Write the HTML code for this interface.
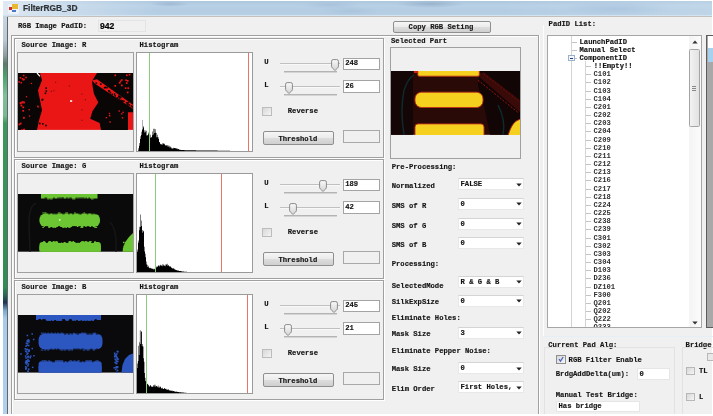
<!DOCTYPE html><html><head><meta charset="utf-8"><style>html,body{margin:0;padding:0;}body{width:713px;height:416px;position:relative;overflow:hidden;background:#fff;}div{position:absolute;}.t{font:bold 7.2px/10px "Liberation Mono",monospace;color:#141414;white-space:pre;-webkit-text-stroke:0.15px #141414;}.s{font:9px/12px "Liberation Sans",sans-serif;white-space:pre;}</style></head><body><div style="left:0;top:0;width:713px;height:416px;will-change:transform">
<div style="left:3px;top:1px;width:709px;height:15px;background:linear-gradient(180deg,#aec7dd 0%,#b8d0e6 30%,#b4cde3 60%,#b6cfe5 100%)"></div>
<div style="left:3px;top:1px;width:709px;height:15px;background:linear-gradient(90deg,rgba(230,238,245,0.85) 0%,rgba(225,235,244,0.6) 6%,rgba(220,232,242,0.0) 22%,rgba(220,232,242,0) 70%,rgba(220,232,242,0.25) 100%)"></div>
<div style="left:150px;top:1px;width:40px;height:6px;background:radial-gradient(ellipse at center,rgba(120,150,180,0.35),rgba(120,150,180,0) 70%)"></div>
<div style="left:300px;top:1px;width:60px;height:8px;background:radial-gradient(ellipse at center,rgba(130,160,190,0.25),rgba(130,160,190,0) 70%)"></div>
<div style="left:395px;top:0px;width:70px;height:8px;background:radial-gradient(ellipse at center,rgba(110,140,170,0.4),rgba(110,140,170,0) 70%)"></div>
<div style="left:560px;top:1px;width:110px;height:15px;background:radial-gradient(ellipse at center,rgba(140,175,210,0.3),rgba(140,175,210,0) 70%)"></div>
<div style="left:320px;top:6px;width:60px;height:10px;background:radial-gradient(ellipse at center,rgba(140,170,200,0.25),rgba(140,170,200,0) 70%)"></div>
<div style="left:3px;top:15px;width:709px;height:1px;background:#d2e4f2"></div>
<div style="left:3px;top:16px;width:709px;height:1px;background:#c4c0bc"></div>
<div style="left:3px;top:16px;width:4px;height:398px;background:linear-gradient(180deg,#c8d6e2 0%,#bcc8d2 6%,#8a9c9c 10%,#5a7a6a 12%,#4aa06c 15%,#80c098 20%,#78b890 25%,#3a9a58 27%,#2e8e50 68%,#2a6a50 70%,#1e3450 72%,#7aa8cc 74%,#a8cce8 76%,#b0d0ec 100%)"></div>
<div style="left:7px;top:17px;width:705px;height:397px;background:#f0f0f0"></div>
<div style="left:7px;top:17px;width:1px;height:397px;background:#5e6670"></div>
<div style="left:7.5px;top:3.5px;width:11px;height:10px;background:rgba(255,255,255,0.5);border-radius:2px"></div>
<div style="left:8.7px;top:6.6px;width:3.4px;height:3.8px;background:#d0302a"></div>
<div style="left:12.4px;top:4.3px;width:5.2px;height:4.9px;background:#e8b830"></div>
<div style="left:12.4px;top:9.5px;width:4.1px;height:2.5px;background:#4a78c8"></div>
<div class="s" style="left:23px;top:2.2px;color:#30343a;font-weight:bold;font-size:8.4px;-webkit-text-stroke:0.2px #30343a">FilterRGB_3D</div>
<div class="t" style="left:18px;top:21.10px;">RGB Image PadID:</div>
<div style="left:98px;top:20px;width:48px;height:12px;border:1px solid #e4e4e4;box-sizing:border-box"></div>
<div class="s" style="left:100px;top:19.6px;font-weight:bold;font-size:8.6px;line-height:12px;color:#000;-webkit-text-stroke:0.2px #000">942</div>
<div style="left:393px;top:21px;width:98px;height:12px;border:1px solid #8e8f8f;border-radius:2px;box-sizing:border-box;background:linear-gradient(180deg,#f6f6f6 0%,#ebebeb 48%,#dddddd 52%,#cfcfcf 100%)"></div>
<div class="t" style="left:408.6px;top:21.70px;">Copy RGB Seting</div>
<div style="left:11px;top:35px;width:1px;height:379px;background:#a0a0a0"></div>
<div style="left:12px;top:36px;width:1px;height:378px;background:#fff"></div>
<div style="left:11px;top:35px;width:528px;height:1px;background:#a0a0a0"></div>
<div style="left:12px;top:36px;width:526px;height:1px;background:#fff"></div>
<div style="left:538px;top:35px;width:1px;height:379px;background:#a0a0a0"></div>
<div style="left:539px;top:35px;width:1px;height:379px;background:#fff"></div>
<div style="left:15px;top:39px;width:370px;height:120px;border:1px solid #ffffff;box-sizing:border-box"></div>
<div style="left:14px;top:38px;width:370px;height:120px;border:1px solid #a0a0a0;box-sizing:border-box"></div>
<div class="t" style="left:21.5px;top:40.20px;">Source Image: R</div>
<div class="t" style="left:139.5px;top:40.20px;">Histogram</div>
<div style="left:17px;top:52px;width:117px;height:100px;border:1px solid #a0a0a0;box-sizing:border-box"></div>
<div style="left:18px;top:53px;width:115px;height:98px;background:#f0f0f0"></div>
<svg style="position:absolute;left:18px;top:72.7px" width="115" height="56.89999999999999" viewBox="18 72.7 115 56.89999999999999"><rect x="18" y="72.7" width="115" height="56.89999999999999" fill="#ea1616"/><polygon points="18,72.7 40,72.7 42,80 38,90 40,100 42,110 39,120 37,129.6 18,129.6" fill="#0a0606"/><polygon points="97,72.7 133,72.7 133,104.5 97,79 92.5,80" fill="#0a0606"/><polygon points="92,80 95,83.5 133,108.5 133,112 128,112 128,129.6 101,129.6 99.7,122.8 90.2,118.4 92.4,111 98.3,102.3 93.9,93.5 92.4,84.7" fill="#0a0606"/><rect x="103.8" y="86.7" width="1.6" height="1.6" fill="#0a0606"/><rect x="108.7" y="90.3" width="1.6" height="1.6" fill="#0a0606"/><rect x="118.2" y="95.0" width="1.6" height="1.6" fill="#0a0606"/><rect x="95.5" y="82.0" width="1.6" height="1.6" fill="#0a0606"/><rect x="104.6" y="86.2" width="1.6" height="1.6" fill="#0a0606"/><rect x="131.8" y="105.8" width="1.6" height="1.6" fill="#0a0606"/><rect x="125.9" y="101.7" width="1.6" height="1.6" fill="#0a0606"/><rect x="118.6" y="95.6" width="1.6" height="1.6" fill="#0a0606"/><rect x="118.5" y="97.9" width="1.6" height="1.6" fill="#0a0606"/><rect x="114.4" y="94.7" width="1.6" height="1.6" fill="#0a0606"/><rect x="119.8" y="96.1" width="1.6" height="1.6" fill="#0a0606"/><rect x="123.1" y="100.1" width="1.6" height="1.6" fill="#0a0606"/><rect x="106.1" y="86.6" width="1.6" height="1.6" fill="#0a0606"/><rect x="127.0" y="102.5" width="1.6" height="1.6" fill="#0a0606"/><rect x="121.6" y="100.1" width="1.6" height="1.6" fill="#0a0606"/><rect x="121.4" y="100.1" width="1.6" height="1.6" fill="#0a0606"/><rect x="109.6" y="91.6" width="1.6" height="1.6" fill="#0a0606"/><rect x="111.5" y="93.3" width="1.6" height="1.6" fill="#0a0606"/><rect x="127.5" y="101.5" width="1.6" height="1.6" fill="#0a0606"/><rect x="100.0" y="83.0" width="1.6" height="1.6" fill="#0a0606"/><rect x="130.7" y="104.9" width="1.6" height="1.6" fill="#0a0606"/><rect x="118.2" y="95.8" width="1.6" height="1.6" fill="#0a0606"/><rect x="113.8" y="93.0" width="1.6" height="1.6" fill="#0a0606"/><rect x="108.0" y="89.7" width="1.6" height="1.6" fill="#0a0606"/><rect x="116.6" y="96.8" width="1.6" height="1.6" fill="#0a0606"/><rect x="120.2" y="99.3" width="1.6" height="1.6" fill="#0a0606"/><rect x="126.7" y="104.0" width="1.6" height="1.6" fill="#0a0606"/><rect x="119.8" y="96.5" width="1.6" height="1.6" fill="#0a0606"/><rect x="126.8" y="104.0" width="1.6" height="1.6" fill="#0a0606"/><rect x="128.5" y="103.8" width="1.6" height="1.6" fill="#0a0606"/><rect x="22.3" y="106.1" width="1.8" height="1.8" fill="#ea1616"/><rect x="23.0" y="116.6" width="1.8" height="1.8" fill="#ea1616"/><rect x="19.7" y="101.8" width="1.8" height="1.8" fill="#ea1616"/><rect x="23.1" y="128.7" width="1.8" height="1.8" fill="#ea1616"/><rect x="18.5" y="123.2" width="1.8" height="1.8" fill="#ea1616"/><rect x="20.5" y="104.4" width="1.8" height="1.8" fill="#ea1616"/><rect x="19.8" y="122.3" width="1.8" height="1.8" fill="#ea1616"/><rect x="23.2" y="101.3" width="1.8" height="1.8" fill="#ea1616"/><rect x="21.7" y="101.3" width="1.8" height="1.8" fill="#ea1616"/><rect x="22.3" y="109.6" width="1.8" height="1.8" fill="#ea1616"/><rect x="23.3" y="128.4" width="1.8" height="1.8" fill="#ea1616"/><rect x="21.0" y="129.0" width="1.8" height="1.8" fill="#ea1616"/><rect x="19.9" y="102.2" width="1.8" height="1.8" fill="#ea1616"/><rect x="21.6" y="100.9" width="1.8" height="1.8" fill="#ea1616"/><rect x="19.6" y="76.7" width="1.6" height="1.6" fill="#ea1616"/><rect x="22.9" y="74.4" width="1.6" height="1.6" fill="#ea1616"/><rect x="18.3" y="80.8" width="1.6" height="1.6" fill="#ea1616"/><rect x="20.5" y="81.6" width="1.6" height="1.6" fill="#ea1616"/><rect x="25.2" y="76.4" width="1.6" height="1.6" fill="#ea1616"/><rect x="21.7" y="77.7" width="1.6" height="1.6" fill="#ea1616"/><rect x="23.2" y="78.4" width="1.6" height="1.6" fill="#ea1616"/><rect x="22.5" y="78.6" width="1.6" height="1.6" fill="#ea1616"/><rect x="37.0" y="105.3" width="1.3" height="1.3" fill="#ea1616"/><rect x="28.9" y="115.1" width="1.3" height="1.3" fill="#ea1616"/><rect x="25.8" y="95.8" width="1.3" height="1.3" fill="#ea1616"/><rect x="37.6" y="106.0" width="1.3" height="1.3" fill="#ea1616"/><rect x="30.8" y="82.5" width="1.3" height="1.3" fill="#ea1616"/><rect x="28.6" y="108.7" width="1.3" height="1.3" fill="#ea1616"/><rect x="114.4" y="84.7" width="1.7" height="1.7" fill="#ea1616"/><rect x="126.0" y="74.1" width="1.7" height="1.7" fill="#ea1616"/><rect x="125.9" y="81.9" width="1.7" height="1.7" fill="#ea1616"/><rect x="126.9" y="79.7" width="1.7" height="1.7" fill="#ea1616"/><rect x="127.4" y="87.0" width="1.7" height="1.7" fill="#ea1616"/><rect x="114.4" y="74.2" width="1.7" height="1.7" fill="#ea1616"/><rect x="126.8" y="91.3" width="1.7" height="1.7" fill="#ea1616"/><rect x="118.8" y="81.7" width="1.7" height="1.7" fill="#ea1616"/><rect x="125.3" y="79.1" width="1.7" height="1.7" fill="#ea1616"/><rect x="120.9" y="78.9" width="1.7" height="1.7" fill="#ea1616"/><rect x="121.0" y="84.3" width="1.7" height="1.7" fill="#ea1616"/><rect x="119.7" y="80.2" width="1.7" height="1.7" fill="#ea1616"/><rect x="128.7" y="73.5" width="1.7" height="1.7" fill="#ea1616"/><rect x="124.8" y="87.0" width="1.7" height="1.7" fill="#ea1616"/><rect x="108.8" y="112.5" width="1.4" height="1.4" fill="#ea1616"/><rect x="121.1" y="112.8" width="1.4" height="1.4" fill="#ea1616"/><rect x="105.7" y="116.7" width="1.4" height="1.4" fill="#ea1616"/><rect x="118.5" y="110.0" width="1.4" height="1.4" fill="#ea1616"/><rect x="109.0" y="114.7" width="1.4" height="1.4" fill="#ea1616"/><rect x="121.8" y="116.8" width="1.4" height="1.4" fill="#ea1616"/><rect x="122.4" y="111.4" width="1.4" height="1.4" fill="#ea1616"/><rect x="109.4" y="121.0" width="1.4" height="1.4" fill="#ea1616"/><rect x="84.8" y="98.9" width="1.1" height="1.1" fill="#701010"/><rect x="55.1" y="81.4" width="1.1" height="1.1" fill="#701010"/><rect x="68.8" y="85.1" width="1.1" height="1.1" fill="#701010"/><rect x="81.3" y="119.4" width="1.1" height="1.1" fill="#701010"/><rect x="53.3" y="89.8" width="1.1" height="1.1" fill="#701010"/><rect x="81.3" y="109.0" width="1.1" height="1.1" fill="#701010"/><rect x="81.3" y="93.3" width="1.1" height="1.1" fill="#701010"/><rect x="50.8" y="90.5" width="1.1" height="1.1" fill="#701010"/><rect x="44.6" y="92.2" width="1.6" height="1.6" fill="#0a0606"/><rect x="41.4" y="98.8" width="1.6" height="1.6" fill="#0a0606"/><rect x="41.9" y="98.4" width="1.6" height="1.6" fill="#0a0606"/><rect x="45.4" y="87.0" width="1.6" height="1.6" fill="#0a0606"/><rect x="39.0" y="122.4" width="1.6" height="1.6" fill="#0a0606"/><rect x="45.2" y="124.4" width="1.6" height="1.6" fill="#0a0606"/><rect x="42.0" y="122.8" width="1.6" height="1.6" fill="#0a0606"/><rect x="45.5" y="90.0" width="1.6" height="1.6" fill="#0a0606"/><path d="M37 72.7 L40 76" stroke="#fff" stroke-width="1.2"/><rect x="70" y="100" width="2.2" height="1.5" fill="#fff"/></svg>
<div style="left:136px;top:52px;width:117px;height:100px;border:1px solid #9a9a9a;box-sizing:border-box"></div>
<div style="left:137px;top:53px;width:115px;height:98px;background:#fff"></div>
<svg style="position:absolute;left:137px;top:53px" width="115" height="98" viewBox="137 53 115 98"><path d="M138 151 L138.0 150.40 L138.5 150.40 L138.5 148.17 L139.0 148.17 L139.0 145.77 L139.5 145.77 L139.5 143.09 L140.0 143.09 L140.0 138.92 L140.5 138.92 L140.5 136.13 L141.0 136.13 L141.0 131.65 L141.5 131.65 L141.5 134.97 L142.0 134.97 L142.0 129.63 L142.5 129.63 L142.5 124.47 L143.0 124.47 L143.0 127.53 L143.5 127.53 L143.5 126.13 L144.0 126.13 L144.0 132.58 L144.5 132.58 L144.5 130.17 L145.0 130.17 L145.0 132.20 L145.5 132.20 L145.5 130.53 L146.0 130.53 L146.0 130.86 L146.5 130.86 L146.5 135.41 L147.0 135.41 L147.0 134.93 L147.5 134.93 L147.5 135.44 L148.0 135.44 L148.0 132.58 L148.5 132.58 L148.5 134.21 L149.0 134.21 L149.0 137.87 L149.5 137.87 L149.5 134.25 L150.0 134.25 L150.0 137.69 L150.5 137.69 L150.5 134.74 L151.0 134.74 L151.0 137.06 L151.5 137.06 L151.5 137.38 L152.0 137.38 L152.0 131.61 L152.5 131.61 L152.5 135.17 L153.0 135.17 L153.0 134.57 L153.5 134.57 L153.5 128.79 L154.0 128.79 L154.0 128.83 L154.5 128.83 L154.5 133.07 L155.0 133.07 L155.0 129.15 L155.5 129.15 L155.5 132.68 L156.0 132.68 L156.0 133.00 L156.5 133.00 L156.5 137.19 L157.0 137.19 L157.0 134.79 L157.5 134.79 L157.5 137.37 L158.0 137.37 L158.0 137.35 L158.5 137.35 L158.5 138.88 L159.0 138.88 L159.0 141.89 L159.5 141.89 L159.5 142.36 L160.0 142.36 L160.0 143.64 L160.5 143.64 L160.5 144.33 L161.0 144.33 L161.0 144.67 L161.5 144.67 L161.5 144.04 L162.0 144.04 L162.0 143.22 L162.5 143.22 L162.5 144.84 L163.0 144.84 L163.0 143.02 L163.5 143.02 L163.5 143.94 L164.0 143.94 L164.0 144.41 L164.5 144.41 L164.5 143.70 L165.0 143.70 L165.0 145.02 L165.5 145.02 L165.5 145.86 L166.0 145.86 L166.0 145.62 L166.5 145.62 L166.5 145.27 L167.0 145.27 L167.0 146.59 L167.5 146.59 L167.5 144.95 L168.0 144.95 L168.0 146.79 L168.5 146.79 L168.5 145.55 L169.0 145.55 L169.0 145.75 L169.5 145.75 L169.5 147.42 L170.0 147.42 L170.0 146.59 L170.5 146.59 L170.5 147.51 L171.0 147.51 L171.0 147.57 L171.5 147.57 L171.5 148.53 L172.0 148.53 L172.0 148.53 L172.5 148.53 L172.5 148.43 L173.0 148.43 L173.0 147.69 L173.5 147.69 L173.5 148.51 L174.0 148.51 L174.0 148.00 L174.5 148.00 L174.5 147.89 L175.0 147.89 L175.0 147.94 L175.5 147.94 L175.5 148.55 L176.0 148.55 L176.0 148.59 L176.5 148.59 L176.5 148.52 L177.0 148.52 L177.0 148.51 L177.5 148.51 L177.5 149.22 L178.0 149.22 L178.0 148.95 L178.5 148.95 L178.5 149.13 L179.0 149.13 L179.0 149.31 L179.5 149.31 L179.5 149.91 L180.0 149.91 L180.0 149.71 L180.5 149.71 L180.5 150.01 L181.0 150.01 L181.0 150.02 L181.5 150.02 L181.5 150.04 L182.0 150.04 L182.0 150.06 L182.5 150.06 L182.5 150.07 L183.0 150.07 L183.0 150.09 L183.5 150.09 L183.5 150.11 L184.0 150.11 L184.0 150.12 L184.5 150.12 L184.5 150.14 L185.0 150.14 L185.0 150.16 L185.5 150.16 L185.5 150.18 L186.0 150.18 L186.0 150.19 L186.5 150.19 L186.5 150.21 L187.0 150.21 L187.0 150.23 L187.5 150.23 L187.5 150.24 L188.0 150.24 L188.0 150.26 L188.5 150.26 L188.5 150.28 L189.0 150.28 L189.0 150.29 L189.5 150.29 L189.5 150.30 L190.0 150.30 L190.0 150.31 L190.5 150.31 L190.5 150.32 L191.0 150.32 L191.0 150.32 L191.5 150.32 L191.5 150.33 L192.0 150.33 L192.0 150.33 L192.5 150.33 L192.5 150.34 L193.0 150.34 L193.0 150.34 L193.5 150.34 L193.5 150.35 L194.0 150.35 L194.0 150.36 L194.5 150.36 L194.5 150.36 L195.0 150.36 L195.0 150.37 L195.5 150.37 L195.5 150.37 L196.0 150.37 L196.0 150.38 L196.5 150.38 L196.5 150.38 L197.0 150.38 L197.0 150.39 L197.5 150.39 L197.5 150.40 L198.0 150.40 L198.0 150.40 L198.5 150.40 L198.5 150.41 L199.0 150.41 L199.0 150.41 L199.5 150.41 L199.5 150.42 L200.0 150.42 L200.0 150.43 L200.5 150.43 L200.5 150.43 L201.0 150.43 L201.0 150.44 L201.5 150.44 L201.5 150.44 L202.0 150.44 L202.0 150.45 L202.5 150.45 L202.5 150.45 L203.0 150.45 L203.0 150.46 L203.5 150.46 L203.5 150.47 L204.0 150.47 L204.0 150.47 L204.5 150.47 L204.5 150.48 L205.0 150.48 L205.0 150.48 L205.5 150.48 L205.5 150.49 L206.0 150.49 L206.0 150.50 L206.5 150.50 L206.5 150.50 L207.0 150.50 L207.0 150.51 L207.5 150.51 L207.5 150.51 L208.0 150.51 L208.0 150.52 L208.5 150.52 L208.5 150.52 L209.0 150.52 L209.0 150.53 L209.5 150.53 L209.5 150.54 L210.0 150.54 L210.0 150.54 L210.5 150.54 L210.5 150.55 L211.0 150.55 L211.0 150.55 L211.5 150.55 L211.5 150.56 L212.0 150.56 L212.0 150.57 L212.5 150.57 L212.5 150.57 L213.0 150.57 L213.0 150.58 L213.5 150.58 L213.5 150.58 L214.0 150.58 L214.0 150.59 L214.5 150.59 L214.5 150.59 L215.0 150.59 L215.0 150.60 L215.5 150.60 L215.5 150.61 L216.0 150.61 L216.0 150.61 L216.5 150.61 L216.5 150.62 L217.0 150.62 L217.0 150.62 L217.5 150.62 L217.5 150.63 L218.0 150.63 L218.0 150.63 L218.5 150.63 L218.5 150.64 L219.0 150.64 L219.0 150.65 L219.5 150.65 L219.5 150.65 L220.0 150.65 L220.0 150.66 L220.5 150.66 L220.5 150.66 L221.0 150.66 L221.0 150.67 L221.5 150.67 L221.5 150.67 L222.0 150.67 L222.0 150.68 L222.5 150.68 L222.5 150.69 L223.0 150.69 L223.0 150.69 L223.5 150.69 L223.5 150.70 L224.0 150.70 L224.0 150.70 L224.5 150.70 L224.5 150.71 L225.0 150.71 L225.0 150.71 L225.5 150.71 L225.5 150.72 L226.0 150.72 L226.0 150.73 L226.5 150.73 L226.5 150.73 L227.0 150.73 L227.0 150.74 L227.5 150.74 L227.5 150.74 L228.0 150.74 L228.0 150.75 L228.5 150.75 L228.5 150.75 L229.0 150.75 L229.0 150.76 L229.5 150.76 L229.5 150.77 L230.0 150.77 L230.0 151 Z" fill="#000"/><rect x="149" y="53" width="1" height="98" fill="#8acc7a"/><rect x="248" y="53" width="1" height="98" fill="#ec7466"/><rect x="142" y="120" width="1" height="9" fill="#b0b0b0"/></svg>
<div class="t" style="left:264.3px;top:57.20px;">U</div>
<div class="t" style="left:264.3px;top:79.90px;">L</div>
<div style="left:280px;top:63px;width:60px;height:1px;background:#c0c0c0"></div>
<div style="left:280px;top:64px;width:60px;height:1px;background:#f8f8f8"></div>
<div style="left:284px;top:71px;width:53px;height:1px;background:#b4b4b4"></div>
<div style="left:284px;top:72px;width:53px;height:1px;background:#d4d4d4"></div>
<svg style="position:absolute;left:330.80px;top:58.50px" width="8" height="12" viewBox="0 0 8 12"><defs><linearGradient id="tg" x1="0" y1="0" x2="0" y2="1"><stop offset="0" stop-color="#fafafa"/><stop offset="1" stop-color="#d4d4d4"/></linearGradient></defs><path d="M0.6 2.2 Q0.6 0.6 2.2 0.6 L5.8 0.6 Q7.4 0.6 7.4 2.2 L7.4 7.4 Q7.4 8.2 6.6 9 L4.4 11.1 Q4 11.4 3.6 11.1 L1.4 9 Q0.6 8.2 0.6 7.4 Z" fill="url(#tg)" stroke="#8a8a8a" stroke-width="1"/></svg>
<div style="left:280px;top:86px;width:60px;height:1px;background:#c0c0c0"></div>
<div style="left:280px;top:87px;width:60px;height:1px;background:#f8f8f8"></div>
<div style="left:284px;top:94px;width:53px;height:1px;background:#b4b4b4"></div>
<div style="left:284px;top:95px;width:53px;height:1px;background:#d4d4d4"></div>
<svg style="position:absolute;left:285.20px;top:81.50px" width="8" height="12" viewBox="0 0 8 12"><defs><linearGradient id="tg" x1="0" y1="0" x2="0" y2="1"><stop offset="0" stop-color="#fafafa"/><stop offset="1" stop-color="#d4d4d4"/></linearGradient></defs><path d="M0.6 2.2 Q0.6 0.6 2.2 0.6 L5.8 0.6 Q7.4 0.6 7.4 2.2 L7.4 7.4 Q7.4 8.2 6.6 9 L4.4 11.1 Q4 11.4 3.6 11.1 L1.4 9 Q0.6 8.2 0.6 7.4 Z" fill="url(#tg)" stroke="#8a8a8a" stroke-width="1"/></svg>
<div style="left:343px;top:58px;width:37px;height:12px;border:1px solid #a4a4a4;box-sizing:border-box"></div>
<div style="left:344px;top:59px;width:35px;height:10px;background:#fff"></div>
<div class="t" style="left:345.2px;top:58.00px;">248</div>
<div style="left:343px;top:80px;width:37px;height:13px;border:1px solid #a4a4a4;box-sizing:border-box"></div>
<div style="left:344px;top:81px;width:35px;height:11px;background:#fff"></div>
<div class="t" style="left:345.2px;top:80.80px;">26</div>
<div style="left:262px;top:107px;width:10px;height:9px;border:1px solid #bcbcbc;box-sizing:border-box;background:linear-gradient(135deg,#d8d8d8,#f4f4f4)"></div>
<div class="t" style="left:287.8px;top:106.40px;">Reverse</div>
<div style="left:263px;top:131px;width:71px;height:14px;border:1px solid #8e8f8f;border-radius:2px;box-sizing:border-box;background:linear-gradient(180deg,#f6f6f6 0%,#ebebeb 48%,#dddddd 52%,#cfcfcf 100%)"></div>
<div class="t" style="left:278.4px;top:133.70px;">Threshold</div>
<div style="left:343px;top:130px;width:37px;height:13px;border:1px solid #a8a8a8;box-sizing:border-box"></div>
<div style="left:15px;top:160px;width:370px;height:120px;border:1px solid #ffffff;box-sizing:border-box"></div>
<div style="left:14px;top:159px;width:370px;height:120px;border:1px solid #a0a0a0;box-sizing:border-box"></div>
<div class="t" style="left:21.5px;top:161.20px;">Source Image: G</div>
<div class="t" style="left:139.5px;top:161.20px;">Histogram</div>
<div style="left:17px;top:173px;width:117px;height:100px;border:1px solid #a0a0a0;box-sizing:border-box"></div>
<div style="left:18px;top:174px;width:115px;height:98px;background:#f0f0f0"></div>
<svg style="position:absolute;left:18px;top:193.9px" width="115" height="57.69999999999999" viewBox="18 193.9 115 57.69999999999999"><rect x="18" y="193.9" width="115" height="57.69999999999999" fill="#0a0a0a"/><path d="M30 251.6 L29 222 Q29 206 36 203" fill="none" stroke="#171717" stroke-width="1.5"/><path d="M116 251.6 L116 238 Q115 228 110 222" fill="none" stroke="#151515" stroke-width="1.5"/><rect x="41" y="193.9" width="56.5" height="4.5" fill="#6cc633"/><rect x="39.4" y="213.3" width="60.6" height="13.7" rx="6" fill="#6cc633"/><rect x="39.4" y="241.9" width="61.5" height="9.699999999999989" rx="3" fill="#6cc633"/><rect x="39.4" y="246" width="61.5" height="5.599999999999994" fill="#6cc633"/><rect x="44.4" y="197.5" width="2.8" height="0.9" fill="#0a0a0a"/><rect x="47.2" y="198.4" width="2.2" height="0.9" fill="#6cc633"/><rect x="49.9" y="198.4" width="2.7" height="0.9" fill="#6cc633"/><rect x="53.1" y="197.5" width="1.6" height="0.9" fill="#0a0a0a"/><rect x="57.3" y="197.5" width="3.3" height="0.9" fill="#0a0a0a"/><rect x="60.4" y="197.5" width="2.7" height="0.9" fill="#0a0a0a"/><rect x="62.2" y="197.5" width="1.8" height="0.9" fill="#0a0a0a"/><rect x="65.8" y="197.5" width="2.5" height="0.9" fill="#0a0a0a"/><rect x="69.1" y="197.5" width="2.7" height="0.9" fill="#0a0a0a"/><rect x="72.2" y="198.4" width="3.2" height="0.9" fill="#6cc633"/><rect x="75.5" y="197.5" width="2.2" height="0.9" fill="#0a0a0a"/><rect x="78.2" y="197.5" width="3.1" height="0.9" fill="#0a0a0a"/><rect x="81.3" y="197.5" width="3.3" height="0.9" fill="#0a0a0a"/><rect x="85.5" y="197.5" width="1.5" height="0.9" fill="#0a0a0a"/><rect x="88.4" y="197.5" width="1.6" height="0.9" fill="#0a0a0a"/><rect x="91.0" y="198.4" width="2.6" height="0.9" fill="#6cc633"/><rect x="42.3" y="212.4" width="3.1" height="0.9" fill="#6cc633"/><rect x="42.3" y="227.0" width="1.6" height="0.9" fill="#6cc633"/><rect x="45.0" y="212.4" width="1.6" height="0.9" fill="#6cc633"/><rect x="45.0" y="226.1" width="3.2" height="0.9" fill="#0a0a0a"/><rect x="48.2" y="213.3" width="2.1" height="0.9" fill="#0a0a0a"/><rect x="48.2" y="227.0" width="2.2" height="0.9" fill="#6cc633"/><rect x="52.3" y="213.3" width="2.2" height="0.9" fill="#0a0a0a"/><rect x="52.3" y="227.0" width="2.2" height="0.9" fill="#6cc633"/><rect x="54.6" y="213.3" width="2.9" height="0.9" fill="#0a0a0a"/><rect x="54.6" y="227.0" width="1.7" height="0.9" fill="#6cc633"/><rect x="57.9" y="212.4" width="2.7" height="0.9" fill="#6cc633"/><rect x="57.9" y="226.1" width="2.3" height="0.9" fill="#0a0a0a"/><rect x="62.2" y="213.3" width="2.4" height="0.9" fill="#0a0a0a"/><rect x="62.2" y="227.0" width="2.5" height="0.9" fill="#6cc633"/><rect x="65.2" y="212.4" width="2.9" height="0.9" fill="#6cc633"/><rect x="65.2" y="227.0" width="2.0" height="0.9" fill="#6cc633"/><rect x="68.2" y="213.3" width="1.6" height="0.9" fill="#0a0a0a"/><rect x="68.2" y="227.0" width="2.4" height="0.9" fill="#6cc633"/><rect x="71.9" y="213.3" width="2.2" height="0.9" fill="#0a0a0a"/><rect x="71.9" y="226.1" width="3.1" height="0.9" fill="#0a0a0a"/><rect x="74.1" y="212.4" width="1.7" height="0.9" fill="#6cc633"/><rect x="74.1" y="226.1" width="2.8" height="0.9" fill="#0a0a0a"/><rect x="78.3" y="213.3" width="2.8" height="0.9" fill="#0a0a0a"/><rect x="78.3" y="226.1" width="2.6" height="0.9" fill="#0a0a0a"/><rect x="80.3" y="213.3" width="1.5" height="0.9" fill="#0a0a0a"/><rect x="80.3" y="227.0" width="3.0" height="0.9" fill="#6cc633"/><rect x="83.4" y="212.4" width="1.7" height="0.9" fill="#6cc633"/><rect x="83.4" y="226.1" width="1.9" height="0.9" fill="#0a0a0a"/><rect x="86.6" y="213.3" width="1.7" height="0.9" fill="#0a0a0a"/><rect x="86.6" y="226.1" width="2.8" height="0.9" fill="#0a0a0a"/><rect x="91.1" y="213.3" width="2.7" height="0.9" fill="#0a0a0a"/><rect x="91.1" y="226.1" width="1.6" height="0.9" fill="#0a0a0a"/><rect x="94.2" y="213.3" width="2.9" height="0.9" fill="#0a0a0a"/><rect x="94.2" y="227.0" width="3.0" height="0.9" fill="#6cc633"/><rect x="43.1" y="241.0" width="2.1" height="0.9" fill="#6cc633"/><rect x="45.8" y="241.9" width="2.0" height="0.9" fill="#0a0a0a"/><rect x="48.4" y="241.0" width="2.7" height="0.9" fill="#6cc633"/><rect x="52.6" y="241.0" width="2.2" height="0.9" fill="#6cc633"/><rect x="55.3" y="241.0" width="2.3" height="0.9" fill="#6cc633"/><rect x="58.1" y="241.9" width="3.4" height="0.9" fill="#0a0a0a"/><rect x="61.8" y="241.9" width="1.8" height="0.9" fill="#0a0a0a"/><rect x="65.6" y="241.9" width="2.8" height="0.9" fill="#0a0a0a"/><rect x="68.5" y="241.0" width="2.8" height="0.9" fill="#6cc633"/><rect x="72.4" y="241.0" width="1.7" height="0.9" fill="#6cc633"/><rect x="75.4" y="241.9" width="2.5" height="0.9" fill="#0a0a0a"/><rect x="78.2" y="241.9" width="1.9" height="0.9" fill="#0a0a0a"/><rect x="81.2" y="241.0" width="2.7" height="0.9" fill="#6cc633"/><rect x="84.5" y="241.0" width="2.9" height="0.9" fill="#6cc633"/><rect x="88.8" y="241.0" width="2.9" height="0.9" fill="#6cc633"/><rect x="91.2" y="241.9" width="2.7" height="0.9" fill="#0a0a0a"/><rect x="94.3" y="241.0" width="1.5" height="0.9" fill="#6cc633"/><polygon points="122.5,251.6 123.5,246 126,241 129,237 133,233 133,251.6" fill="#6cc633"/><rect x="124.9" y="241.8" width="1.5" height="1.5" fill="#6cc633"/><rect x="123.0" y="241.6" width="1.5" height="1.5" fill="#6cc633"/><rect x="123.9" y="245.7" width="1.5" height="1.5" fill="#6cc633"/><rect x="122.9" y="247.9" width="1.5" height="1.5" fill="#6cc633"/><rect x="124.9" y="244.0" width="1.5" height="1.5" fill="#6cc633"/><rect x="124.8" y="246.3" width="1.5" height="1.5" fill="#6cc633"/><rect x="59" y="219" width="1.5" height="1.5" fill="#dfffd0"/></svg>
<div style="left:136px;top:173px;width:117px;height:100px;border:1px solid #9a9a9a;box-sizing:border-box"></div>
<div style="left:137px;top:174px;width:115px;height:98px;background:#fff"></div>
<svg style="position:absolute;left:137px;top:174px" width="115" height="98" viewBox="137 174 115 98"><path d="M137 272 L137.0 251.86 L137.5 251.86 L137.5 249.52 L138.0 249.52 L138.0 240.45 L138.5 240.45 L138.5 242.73 L139.0 242.73 L139.0 230.37 L139.5 230.37 L139.5 226.70 L140.0 226.70 L140.0 227.09 L140.5 227.09 L140.5 214.59 L141.0 214.59 L141.0 226.10 L141.5 226.10 L141.5 220.39 L142.0 220.39 L142.0 229.92 L142.5 229.92 L142.5 232.68 L143.0 232.68 L143.0 230.72 L143.5 230.72 L143.5 231.61 L144.0 231.61 L144.0 246.78 L144.5 246.78 L144.5 251.44 L145.0 251.44 L145.0 253.77 L145.5 253.77 L145.5 257.34 L146.0 257.34 L146.0 261.49 L146.5 261.49 L146.5 264.46 L147.0 264.46 L147.0 264.67 L147.5 264.67 L147.5 267.08 L148.0 267.08 L148.0 265.77 L148.5 265.77 L148.5 267.24 L149.0 267.24 L149.0 267.83 L149.5 267.83 L149.5 268.19 L150.0 268.19 L150.0 268.23 L150.5 268.23 L150.5 267.75 L151.0 267.75 L151.0 268.74 L151.5 268.74 L151.5 268.35 L152.0 268.35 L152.0 268.42 L152.5 268.42 L152.5 268.88 L153.0 268.88 L153.0 268.81 L153.5 268.81 L153.5 269.47 L154.0 269.47 L154.0 269.15 L154.5 269.15 L154.5 268.63 L155.0 268.63 L155.0 267.58 L155.5 267.58 L155.5 267.59 L156.0 267.59 L156.0 267.42 L156.5 267.42 L156.5 266.54 L157.0 266.54 L157.0 266.47 L157.5 266.47 L157.5 266.67 L158.0 266.67 L158.0 265.52 L158.5 265.52 L158.5 265.60 L159.0 265.60 L159.0 266.47 L159.5 266.47 L159.5 265.62 L160.0 265.62 L160.0 265.61 L160.5 265.61 L160.5 264.71 L161.0 264.71 L161.0 264.98 L161.5 264.98 L161.5 265.96 L162.0 265.96 L162.0 264.26 L162.5 264.26 L162.5 266.25 L163.0 266.25 L163.0 265.48 L163.5 265.48 L163.5 264.59 L164.0 264.59 L164.0 266.02 L164.5 266.02 L164.5 265.13 L165.0 265.13 L165.0 266.19 L165.5 266.19 L165.5 264.55 L166.0 264.55 L166.0 264.25 L166.5 264.25 L166.5 264.67 L167.0 264.67 L167.0 263.83 L167.5 263.83 L167.5 265.63 L168.0 265.63 L168.0 265.08 L168.5 265.08 L168.5 265.70 L169.0 265.70 L169.0 266.11 L169.5 266.11 L169.5 266.72 L170.0 266.72 L170.0 266.39 L170.5 266.39 L170.5 266.61 L171.0 266.61 L171.0 267.64 L171.5 267.64 L171.5 267.60 L172.0 267.60 L172.0 268.72 L172.5 268.72 L172.5 268.09 L173.0 268.09 L173.0 268.42 L173.5 268.42 L173.5 268.29 L174.0 268.29 L174.0 268.76 L174.5 268.76 L174.5 269.56 L175.0 269.56 L175.0 269.70 L175.5 269.70 L175.5 269.69 L176.0 269.69 L176.0 270.30 L176.5 270.30 L176.5 270.11 L177.0 270.11 L177.0 270.42 L177.5 270.42 L177.5 270.56 L178.0 270.56 L178.0 270.70 L178.5 270.70 L178.5 270.45 L179.0 270.45 L179.0 270.89 L179.5 270.89 L179.5 270.95 L180.0 270.95 L180.0 271.01 L180.5 271.01 L180.5 271.09 L181.0 271.09 L181.0 271.22 L181.5 271.22 L181.5 271.35 L182.0 271.35 L182.0 271.47 L182.5 271.47 L182.5 271.53 L183.0 271.53 L183.0 271.57 L183.5 271.57 L183.5 271.61 L184.0 271.61 L184.0 271.65 L184.5 271.65 L184.5 271.69 L185.0 271.69 L185.0 271.73 L185.5 271.73 L185.5 271.77 L186.0 271.77 L186.0 271.81 L186.5 271.81 L186.5 271.85 L187.0 271.85 L187.0 271.89 L187.5 271.89 L187.5 271.93 L188.0 271.93 L188.0 271.97 L188.5 271.97 L188.5 272.00 L189.0 272.00 L189.0 272.00 L189.5 272.00 L189.5 272.00 L190.0 272.00 L190.0 272.00 L190.5 272.00 L190.5 272.00 L191.0 272.00 L191.0 272.00 L191.5 272.00 L191.5 272.00 L192.0 272.00 L192.0 272.00 L192.5 272.00 L192.5 272.00 L193.0 272.00 L193.0 272.00 L193.5 272.00 L193.5 272.00 L194.0 272.00 L194.0 272.00 L194.5 272.00 L194.5 272.00 L195.0 272.00 L195.0 272.00 L195.5 272.00 L195.5 272.00 L196.0 272.00 L196.0 272.00 L196.5 272.00 L196.5 272.00 L197.0 272.00 L197.0 272.00 L197.5 272.00 L197.5 272.00 L198.0 272.00 L198.0 272.00 L198.5 272.00 L198.5 272.00 L199.0 272.00 L199.0 272.00 L199.5 272.00 L199.5 272.00 L200.0 272.00 L200.0 272.00 L200.5 272.00 L200.5 272.00 L201.0 272.00 L201.0 272.00 L201.5 272.00 L201.5 272.00 L202.0 272.00 L202.0 272.00 L202.5 272.00 L202.5 272.00 L203.0 272.00 L203.0 272.00 L203.5 272.00 L203.5 272.00 L204.0 272.00 L204.0 272.00 L204.5 272.00 L204.5 272.00 L205.0 272.00 L205.0 272.00 L205.5 272.00 L205.5 272.00 L206.0 272.00 L206.0 272.00 L206.5 272.00 L206.5 272.00 L207.0 272.00 L207.0 272.00 L207.5 272.00 L207.5 272.00 L208.0 272.00 L208.0 272.00 L208.5 272.00 L208.5 272.00 L209.0 272.00 L209.0 272.00 L209.5 272.00 L209.5 272.00 L210.0 272.00 L210.0 272.00 L210.5 272.00 L210.5 272.00 L211.0 272.00 L211.0 272.00 L211.5 272.00 L211.5 272.00 L212.0 272.00 L212.0 272.00 L212.5 272.00 L212.5 272.00 L213.0 272.00 L213.0 272.00 L213.5 272.00 L213.5 272.00 L214.0 272.00 L214.0 272.00 L214.5 272.00 L214.5 272.00 L215.0 272.00 L215.0 272.00 L215.5 272.00 L215.5 272.00 L216.0 272.00 L216.0 272.00 L216.5 272.00 L216.5 272.00 L217.0 272.00 L217.0 272.00 L217.5 272.00 L217.5 272.00 L218.0 272.00 L218.0 272.00 L218.5 272.00 L218.5 272.00 L219.0 272.00 L219.0 272.00 L219.5 272.00 L219.5 272.00 L220.0 272.00 L220.0 272.00 L220.5 272.00 L220.5 272.00 L221.0 272.00 L221.0 272.00 L221.5 272.00 L221.5 272.00 L222.0 272.00 L222.0 272.00 L222.5 272.00 L222.5 272.00 L223.0 272.00 L223.0 272.00 L223.5 272.00 L223.5 272.00 L224.0 272.00 L224.0 272.00 L224.5 272.00 L224.5 272.00 L225.0 272.00 L225.0 272.00 L225.5 272.00 L225.5 272.00 L226.0 272.00 L226.0 272.00 L226.5 272.00 L226.5 272.00 L227.0 272.00 L227.0 272.00 L227.5 272.00 L227.5 272.00 L228.0 272.00 L228.0 272.00 L228.5 272.00 L228.5 272.00 L229.0 272.00 L229.0 272.00 L229.5 272.00 L229.5 272.00 L230.0 272.00 L230.0 272 Z" fill="#000"/><rect x="155" y="174" width="1" height="98" fill="#8acc7a"/><rect x="221" y="174" width="1" height="98" fill="#ec7466"/></svg>
<div class="t" style="left:264.3px;top:178.20px;">U</div>
<div class="t" style="left:264.3px;top:200.90px;">L</div>
<div style="left:280px;top:184px;width:60px;height:1px;background:#c0c0c0"></div>
<div style="left:280px;top:185px;width:60px;height:1px;background:#f8f8f8"></div>
<div style="left:284px;top:192px;width:53px;height:1px;background:#b4b4b4"></div>
<div style="left:284px;top:193px;width:53px;height:1px;background:#d4d4d4"></div>
<svg style="position:absolute;left:318.50px;top:179.50px" width="8" height="12" viewBox="0 0 8 12"><defs><linearGradient id="tg" x1="0" y1="0" x2="0" y2="1"><stop offset="0" stop-color="#fafafa"/><stop offset="1" stop-color="#d4d4d4"/></linearGradient></defs><path d="M0.6 2.2 Q0.6 0.6 2.2 0.6 L5.8 0.6 Q7.4 0.6 7.4 2.2 L7.4 7.4 Q7.4 8.2 6.6 9 L4.4 11.1 Q4 11.4 3.6 11.1 L1.4 9 Q0.6 8.2 0.6 7.4 Z" fill="url(#tg)" stroke="#8a8a8a" stroke-width="1"/></svg>
<div style="left:280px;top:207px;width:60px;height:1px;background:#c0c0c0"></div>
<div style="left:280px;top:208px;width:60px;height:1px;background:#f8f8f8"></div>
<div style="left:284px;top:215px;width:53px;height:1px;background:#b4b4b4"></div>
<div style="left:284px;top:216px;width:53px;height:1px;background:#d4d4d4"></div>
<svg style="position:absolute;left:288.70px;top:202.50px" width="8" height="12" viewBox="0 0 8 12"><defs><linearGradient id="tg" x1="0" y1="0" x2="0" y2="1"><stop offset="0" stop-color="#fafafa"/><stop offset="1" stop-color="#d4d4d4"/></linearGradient></defs><path d="M0.6 2.2 Q0.6 0.6 2.2 0.6 L5.8 0.6 Q7.4 0.6 7.4 2.2 L7.4 7.4 Q7.4 8.2 6.6 9 L4.4 11.1 Q4 11.4 3.6 11.1 L1.4 9 Q0.6 8.2 0.6 7.4 Z" fill="url(#tg)" stroke="#8a8a8a" stroke-width="1"/></svg>
<div style="left:343px;top:179px;width:37px;height:12px;border:1px solid #a4a4a4;box-sizing:border-box"></div>
<div style="left:344px;top:180px;width:35px;height:10px;background:#fff"></div>
<div class="t" style="left:345.2px;top:179.00px;">189</div>
<div style="left:343px;top:201px;width:37px;height:13px;border:1px solid #a4a4a4;box-sizing:border-box"></div>
<div style="left:344px;top:202px;width:35px;height:11px;background:#fff"></div>
<div class="t" style="left:345.2px;top:201.80px;">42</div>
<div style="left:262px;top:228px;width:10px;height:9px;border:1px solid #bcbcbc;box-sizing:border-box;background:linear-gradient(135deg,#d8d8d8,#f4f4f4)"></div>
<div class="t" style="left:287.8px;top:227.40px;">Reverse</div>
<div style="left:263px;top:252px;width:71px;height:14px;border:1px solid #8e8f8f;border-radius:2px;box-sizing:border-box;background:linear-gradient(180deg,#f6f6f6 0%,#ebebeb 48%,#dddddd 52%,#cfcfcf 100%)"></div>
<div class="t" style="left:278.4px;top:254.70px;">Threshold</div>
<div style="left:343px;top:251px;width:37px;height:13px;border:1px solid #a8a8a8;box-sizing:border-box"></div>
<div style="left:15px;top:281px;width:370px;height:120px;border:1px solid #ffffff;box-sizing:border-box"></div>
<div style="left:14px;top:280px;width:370px;height:120px;border:1px solid #a0a0a0;box-sizing:border-box"></div>
<div class="t" style="left:21.5px;top:282.20px;">Source Image: B</div>
<div class="t" style="left:139.5px;top:282.20px;">Histogram</div>
<div style="left:17px;top:294px;width:117px;height:100px;border:1px solid #a0a0a0;box-sizing:border-box"></div>
<div style="left:18px;top:295px;width:115px;height:98px;background:#f0f0f0"></div>
<svg style="position:absolute;left:18px;top:315.0px" width="115" height="57.60000000000002" viewBox="18 315.0 115 57.60000000000002"><rect x="18" y="315.0" width="115" height="57.60000000000002" fill="#0a0a0c"/><rect x="36" y="315.0" width="65" height="5" fill="#2c56c0"/><rect x="38.6" y="333.6" width="63.9" height="16" rx="6" fill="#2c56c0"/><rect x="38.6" y="361.3" width="63.1" height="11.300000000000011" rx="3" fill="#2c56c0"/><rect x="38.6" y="366" width="63.1" height="6.600000000000023" fill="#2c56c0"/><rect x="27.8" y="356.1" width="1.6" height="1.6" fill="#2c56c0"/><rect x="26.4" y="361.9" width="1.6" height="1.6" fill="#2c56c0"/><rect x="27.9" y="350.4" width="1.6" height="1.6" fill="#2c56c0"/><rect x="27.4" y="370.6" width="1.6" height="1.6" fill="#2c56c0"/><rect x="26.4" y="344.3" width="1.6" height="1.6" fill="#2c56c0"/><rect x="25.4" y="361.8" width="1.6" height="1.6" fill="#2c56c0"/><rect x="27.2" y="370.5" width="1.6" height="1.6" fill="#2c56c0"/><rect x="27.9" y="344.7" width="1.6" height="1.6" fill="#2c56c0"/><rect x="25.3" y="345.3" width="1.6" height="1.6" fill="#2c56c0"/><rect x="25.2" y="361.4" width="1.6" height="1.6" fill="#2c56c0"/><rect x="27.9" y="368.4" width="1.6" height="1.6" fill="#2c56c0"/><rect x="25.5" y="367.1" width="1.6" height="1.6" fill="#2c56c0"/><rect x="25.8" y="351.2" width="1.6" height="1.6" fill="#2c56c0"/><rect x="27.4" y="339.1" width="1.6" height="1.6" fill="#2c56c0"/><rect x="24.9" y="366.0" width="1.6" height="1.6" fill="#2c56c0"/><rect x="25.7" y="348.8" width="1.6" height="1.6" fill="#2c56c0"/><rect x="26.8" y="360.3" width="1.6" height="1.6" fill="#2c56c0"/><rect x="24.5" y="348.1" width="1.6" height="1.6" fill="#2c56c0"/><rect x="26.2" y="353.5" width="1.6" height="1.6" fill="#2c56c0"/><rect x="25.3" y="357.1" width="1.6" height="1.6" fill="#2c56c0"/><rect x="28.3" y="350.1" width="1.6" height="1.6" fill="#2c56c0"/><rect x="26.7" y="340.3" width="1.6" height="1.6" fill="#2c56c0"/><rect x="25.6" y="360.0" width="1.6" height="1.6" fill="#2c56c0"/><rect x="25.0" y="367.9" width="1.6" height="1.6" fill="#2c56c0"/><rect x="28.1" y="339.5" width="1.6" height="1.6" fill="#2c56c0"/><rect x="28.3" y="349.5" width="1.6" height="1.6" fill="#2c56c0"/><rect x="27.6" y="363.3" width="1.6" height="1.6" fill="#2c56c0"/><rect x="25.7" y="360.3" width="1.6" height="1.6" fill="#2c56c0"/><rect x="27.1" y="365.0" width="1.6" height="1.6" fill="#2c56c0"/><rect x="25.6" y="363.2" width="1.6" height="1.6" fill="#2c56c0"/><rect x="28.3" y="360.2" width="1.6" height="1.6" fill="#2c56c0"/><rect x="26.6" y="340.1" width="1.6" height="1.6" fill="#2c56c0"/><rect x="26.5" y="348.7" width="1.6" height="1.6" fill="#2c56c0"/><rect x="27.4" y="360.4" width="1.6" height="1.6" fill="#2c56c0"/><rect x="26.8" y="342.6" width="1.6" height="1.6" fill="#2c56c0"/><rect x="27.1" y="358.7" width="1.6" height="1.6" fill="#2c56c0"/><rect x="25.2" y="368.0" width="1.6" height="1.6" fill="#2c56c0"/><rect x="27.1" y="340.4" width="1.6" height="1.6" fill="#2c56c0"/><rect x="28.2" y="341.1" width="1.6" height="1.6" fill="#2c56c0"/><rect x="25.8" y="361.9" width="1.6" height="1.6" fill="#2c56c0"/><rect x="26.9" y="356.0" width="1.6" height="1.6" fill="#2c56c0"/><rect x="27.1" y="352.5" width="1.6" height="1.6" fill="#2c56c0"/><rect x="25.7" y="342.3" width="1.6" height="1.6" fill="#2c56c0"/><rect x="24.8" y="361.8" width="1.6" height="1.6" fill="#2c56c0"/><rect x="27.5" y="355.6" width="1.6" height="1.6" fill="#2c56c0"/><rect x="116.5" y="357.9" width="1.6" height="1.6" fill="#2c56c0"/><rect x="114.6" y="358.4" width="1.6" height="1.6" fill="#2c56c0"/><rect x="117.0" y="350.9" width="1.6" height="1.6" fill="#2c56c0"/><rect x="115.5" y="355.4" width="1.6" height="1.6" fill="#2c56c0"/><rect x="116.6" y="357.8" width="1.6" height="1.6" fill="#2c56c0"/><rect x="114.8" y="358.9" width="1.6" height="1.6" fill="#2c56c0"/><rect x="115.7" y="367.0" width="1.6" height="1.6" fill="#2c56c0"/><rect x="114.9" y="368.6" width="1.6" height="1.6" fill="#2c56c0"/><rect x="113.9" y="356.0" width="1.6" height="1.6" fill="#2c56c0"/><rect x="113.9" y="352.5" width="1.6" height="1.6" fill="#2c56c0"/><rect x="116.6" y="366.0" width="1.6" height="1.6" fill="#2c56c0"/><rect x="114.2" y="354.2" width="1.6" height="1.6" fill="#2c56c0"/><rect x="115.2" y="366.4" width="1.6" height="1.6" fill="#2c56c0"/><rect x="116.8" y="366.5" width="1.6" height="1.6" fill="#2c56c0"/><rect x="115.9" y="353.2" width="1.6" height="1.6" fill="#2c56c0"/><rect x="115.1" y="354.3" width="1.6" height="1.6" fill="#2c56c0"/><rect x="115.6" y="362.5" width="1.6" height="1.6" fill="#2c56c0"/><rect x="114.3" y="355.5" width="1.6" height="1.6" fill="#2c56c0"/><rect x="116.6" y="350.7" width="1.6" height="1.6" fill="#2c56c0"/><rect x="116.7" y="369.6" width="1.6" height="1.6" fill="#2c56c0"/><rect x="117.3" y="358.4" width="1.6" height="1.6" fill="#2c56c0"/><rect x="115.7" y="362.8" width="1.6" height="1.6" fill="#2c56c0"/><rect x="116.0" y="371.5" width="1.6" height="1.6" fill="#2c56c0"/><rect x="116.2" y="356.6" width="1.6" height="1.6" fill="#2c56c0"/><rect x="116.9" y="360.6" width="1.6" height="1.6" fill="#2c56c0"/><rect x="115.9" y="366.0" width="1.6" height="1.6" fill="#2c56c0"/><rect x="113.5" y="367.0" width="1.6" height="1.6" fill="#2c56c0"/><rect x="116.1" y="360.8" width="1.6" height="1.6" fill="#2c56c0"/><rect x="115.6" y="360.1" width="1.6" height="1.6" fill="#2c56c0"/><rect x="114.3" y="361.7" width="1.6" height="1.6" fill="#2c56c0"/><rect x="38.3" y="319.1" width="2.8" height="0.9" fill="#0a0a0c"/><rect x="42.2" y="319.1" width="3.4" height="0.9" fill="#0a0a0c"/><rect x="46.2" y="320.0" width="3.1" height="0.9" fill="#2c56c0"/><rect x="49.0" y="320.0" width="2.2" height="0.9" fill="#2c56c0"/><rect x="51.7" y="320.0" width="2.6" height="0.9" fill="#2c56c0"/><rect x="56.1" y="320.0" width="3.2" height="0.9" fill="#2c56c0"/><rect x="59.0" y="320.0" width="3.2" height="0.9" fill="#2c56c0"/><rect x="62.1" y="319.1" width="2.9" height="0.9" fill="#0a0a0c"/><rect x="65.6" y="320.0" width="3.1" height="0.9" fill="#2c56c0"/><rect x="69.2" y="319.1" width="2.4" height="0.9" fill="#0a0a0c"/><rect x="72.2" y="320.0" width="1.7" height="0.9" fill="#2c56c0"/><rect x="74.3" y="320.0" width="1.9" height="0.9" fill="#2c56c0"/><rect x="77.8" y="320.0" width="2.9" height="0.9" fill="#2c56c0"/><rect x="81.7" y="320.0" width="2.8" height="0.9" fill="#2c56c0"/><rect x="84.6" y="320.0" width="3.0" height="0.9" fill="#2c56c0"/><rect x="88.0" y="320.0" width="3.3" height="0.9" fill="#2c56c0"/><rect x="91.8" y="320.0" width="2.2" height="0.9" fill="#2c56c0"/><rect x="94.8" y="319.1" width="1.9" height="0.9" fill="#0a0a0c"/><rect x="40.8" y="332.7" width="3.1" height="0.9" fill="#2c56c0"/><rect x="40.8" y="349.6" width="2.4" height="0.9" fill="#2c56c0"/><rect x="44.3" y="332.7" width="1.8" height="0.9" fill="#2c56c0"/><rect x="44.3" y="349.6" width="1.8" height="0.9" fill="#2c56c0"/><rect x="47.3" y="332.7" width="1.8" height="0.9" fill="#2c56c0"/><rect x="47.3" y="349.6" width="1.6" height="0.9" fill="#2c56c0"/><rect x="50.5" y="332.7" width="2.3" height="0.9" fill="#2c56c0"/><rect x="50.5" y="348.7" width="1.6" height="0.9" fill="#0a0a0c"/><rect x="54.3" y="332.7" width="1.6" height="0.9" fill="#2c56c0"/><rect x="54.3" y="348.7" width="1.9" height="0.9" fill="#0a0a0c"/><rect x="57.0" y="332.7" width="1.8" height="0.9" fill="#2c56c0"/><rect x="57.0" y="348.7" width="2.2" height="0.9" fill="#0a0a0c"/><rect x="60.3" y="332.7" width="3.0" height="0.9" fill="#2c56c0"/><rect x="60.3" y="349.6" width="3.1" height="0.9" fill="#2c56c0"/><rect x="64.1" y="333.6" width="2.1" height="0.9" fill="#0a0a0c"/><rect x="64.1" y="349.6" width="2.0" height="0.9" fill="#2c56c0"/><rect x="67.8" y="333.6" width="2.2" height="0.9" fill="#0a0a0c"/><rect x="67.8" y="349.6" width="2.9" height="0.9" fill="#2c56c0"/><rect x="71.3" y="333.6" width="1.5" height="0.9" fill="#0a0a0c"/><rect x="71.3" y="349.6" width="1.7" height="0.9" fill="#2c56c0"/><rect x="73.2" y="332.7" width="1.6" height="0.9" fill="#2c56c0"/><rect x="73.2" y="348.7" width="3.3" height="0.9" fill="#0a0a0c"/><rect x="76.5" y="333.6" width="2.5" height="0.9" fill="#0a0a0c"/><rect x="76.5" y="348.7" width="3.3" height="0.9" fill="#0a0a0c"/><rect x="80.9" y="332.7" width="2.1" height="0.9" fill="#2c56c0"/><rect x="80.9" y="348.7" width="3.4" height="0.9" fill="#0a0a0c"/><rect x="82.8" y="332.7" width="3.2" height="0.9" fill="#2c56c0"/><rect x="82.8" y="349.6" width="2.3" height="0.9" fill="#2c56c0"/><rect x="86.4" y="333.6" width="3.4" height="0.9" fill="#0a0a0c"/><rect x="86.4" y="349.6" width="3.0" height="0.9" fill="#2c56c0"/><rect x="90.2" y="333.6" width="2.6" height="0.9" fill="#0a0a0c"/><rect x="90.2" y="348.7" width="2.2" height="0.9" fill="#0a0a0c"/><rect x="92.9" y="332.7" width="3.1" height="0.9" fill="#2c56c0"/><rect x="92.9" y="349.6" width="2.0" height="0.9" fill="#2c56c0"/><rect x="95.8" y="333.6" width="2.7" height="0.9" fill="#0a0a0c"/><rect x="95.8" y="348.7" width="2.3" height="0.9" fill="#0a0a0c"/><rect x="41.6" y="360.4" width="2.9" height="0.9" fill="#2c56c0"/><rect x="44.0" y="360.4" width="3.0" height="0.9" fill="#2c56c0"/><rect x="48.2" y="360.4" width="2.0" height="0.9" fill="#2c56c0"/><rect x="51.7" y="361.3" width="3.3" height="0.9" fill="#0a0a0c"/><rect x="54.9" y="360.4" width="3.3" height="0.9" fill="#2c56c0"/><rect x="57.8" y="360.4" width="2.2" height="0.9" fill="#2c56c0"/><rect x="59.9" y="360.4" width="3.4" height="0.9" fill="#2c56c0"/><rect x="63.2" y="361.3" width="1.7" height="0.9" fill="#0a0a0c"/><rect x="66.3" y="361.3" width="2.0" height="0.9" fill="#0a0a0c"/><rect x="69.4" y="360.4" width="2.8" height="0.9" fill="#2c56c0"/><rect x="73.5" y="360.4" width="2.0" height="0.9" fill="#2c56c0"/><rect x="77.2" y="360.4" width="2.6" height="0.9" fill="#2c56c0"/><rect x="79.5" y="361.3" width="2.7" height="0.9" fill="#0a0a0c"/><rect x="83.3" y="361.3" width="1.9" height="0.9" fill="#0a0a0c"/><rect x="85.5" y="360.4" width="3.2" height="0.9" fill="#2c56c0"/><rect x="88.6" y="360.4" width="3.4" height="0.9" fill="#2c56c0"/><rect x="91.9" y="361.3" width="1.7" height="0.9" fill="#0a0a0c"/><rect x="95.5" y="360.4" width="3.2" height="0.9" fill="#2c56c0"/><polygon points="121.5,372.6 122.5,365 125,359 129,355 133,353.5 133,372.6" fill="#2c56c0"/><rect x="29.5" y="357.0" width="1.5" height="1.5" fill="#2c56c0"/><rect x="31.9" y="366.6" width="1.5" height="1.5" fill="#2c56c0"/><rect x="24.9" y="355.3" width="1.5" height="1.5" fill="#2c56c0"/><rect x="26.6" y="334.7" width="1.5" height="1.5" fill="#2c56c0"/><rect x="33.2" y="355.0" width="1.5" height="1.5" fill="#2c56c0"/><rect x="32.9" y="338.7" width="1.5" height="1.5" fill="#2c56c0"/><rect x="28.2" y="349.5" width="1.5" height="1.5" fill="#2c56c0"/><rect x="31.4" y="333.2" width="1.5" height="1.5" fill="#2c56c0"/><rect x="24.9" y="350.4" width="1.5" height="1.5" fill="#2c56c0"/><rect x="20.2" y="353.2" width="1.5" height="1.5" fill="#2c56c0"/><rect x="31.5" y="347.8" width="1.5" height="1.5" fill="#2c56c0"/><rect x="30.0" y="355.4" width="1.5" height="1.5" fill="#2c56c0"/></svg>
<div style="left:136px;top:294px;width:117px;height:100px;border:1px solid #9a9a9a;box-sizing:border-box"></div>
<div style="left:137px;top:295px;width:115px;height:98px;background:#fff"></div>
<svg style="position:absolute;left:137px;top:295px" width="115" height="98" viewBox="137 295 115 98"><path d="M136.9 393 L136.9 368.04 L137.4 368.04 L137.4 363.41 L137.9 363.41 L137.9 361.06 L138.4 361.06 L138.4 345.80 L138.9 345.80 L138.9 355.01 L139.4 355.01 L139.4 342.25 L139.9 342.25 L139.9 330.26 L140.4 330.26 L140.4 343.96 L140.9 343.96 L140.9 331.19 L141.4 331.19 L141.4 331.63 L141.9 331.63 L141.9 346.23 L142.4 346.23 L142.4 344.07 L142.9 344.07 L142.9 346.51 L143.4 346.51 L143.4 358.14 L143.9 358.14 L143.9 361.63 L144.4 361.63 L144.4 372.92 L144.9 372.92 L144.9 377.78 L145.4 377.78 L145.4 380.92 L145.9 380.92 L145.9 381.67 L146.4 381.67 L146.4 382.59 L146.9 382.59 L146.9 384.04 L147.4 384.04 L147.4 383.86 L147.9 383.86 L147.9 385.37 L148.4 385.37 L148.4 384.71 L148.9 384.71 L148.9 386.69 L149.4 386.69 L149.4 386.25 L149.9 386.25 L149.9 385.32 L150.4 385.32 L150.4 385.27 L150.9 385.27 L150.9 386.12 L151.4 386.12 L151.4 387.04 L151.9 387.04 L151.9 386.65 L152.4 386.65 L152.4 386.78 L152.9 386.78 L152.9 386.54 L153.4 386.54 L153.4 385.12 L153.9 385.12 L153.9 386.61 L154.4 386.61 L154.4 384.75 L154.9 384.75 L154.9 384.69 L155.4 384.69 L155.4 386.80 L155.9 386.80 L155.9 386.05 L156.4 386.05 L156.4 385.92 L156.9 385.92 L156.9 387.26 L157.4 387.26 L157.4 386.42 L157.9 386.42 L157.9 385.43 L158.4 385.43 L158.4 387.47 L158.9 387.47 L158.9 386.51 L159.4 386.51 L159.4 387.73 L159.9 387.73 L159.9 386.90 L160.4 386.90 L160.4 386.41 L160.9 386.41 L160.9 388.00 L161.4 388.00 L161.4 388.53 L161.9 388.53 L161.9 388.52 L162.4 388.52 L162.4 387.83 L162.9 387.83 L162.9 388.92 L163.4 388.92 L163.4 388.95 L163.9 388.95 L163.9 388.41 L164.4 388.41 L164.4 387.89 L164.9 387.89 L164.9 388.86 L165.4 388.86 L165.4 389.05 L165.9 389.05 L165.9 388.87 L166.4 388.87 L166.4 389.78 L166.9 389.78 L166.9 389.30 L167.4 389.30 L167.4 389.97 L167.9 389.97 L167.9 389.61 L168.4 389.61 L168.4 389.39 L168.9 389.39 L168.9 390.54 L169.4 390.54 L169.4 390.18 L169.9 390.18 L169.9 390.30 L170.4 390.30 L170.4 390.87 L170.9 390.87 L170.9 390.91 L171.4 390.91 L171.4 390.42 L171.9 390.42 L171.9 390.53 L172.4 390.53 L172.4 391.27 L172.9 391.27 L172.9 390.95 L173.4 390.95 L173.4 390.90 L173.9 390.90 L173.9 391.45 L174.4 391.45 L174.4 391.31 L174.9 391.31 L174.9 391.72 L175.4 391.72 L175.4 391.64 L175.9 391.64 L175.9 391.58 L176.4 391.58 L176.4 391.71 L176.9 391.71 L176.9 391.74 L177.4 391.74 L177.4 392.10 L177.9 392.10 L177.9 392.02 L178.4 392.02 L178.4 392.07 L178.9 392.07 L178.9 392.13 L179.4 392.13 L179.4 392.18 L179.9 392.18 L179.9 392.23 L180.4 392.23 L180.4 392.29 L180.9 392.29 L180.9 392.34 L181.4 392.34 L181.4 392.39 L181.9 392.39 L181.9 392.44 L182.4 392.44 L182.4 392.50 L182.9 392.50 L182.9 392.55 L183.4 392.55 L183.4 392.60 L183.9 392.60 L183.9 392.66 L184.4 392.66 L184.4 392.71 L184.9 392.71 L184.9 392.76 L185.4 392.76 L185.4 392.82 L185.9 392.82 L185.9 392.87 L186.4 392.87 L186.4 392.90 L186.9 392.90 L186.9 392.91 L187.4 392.91 L187.4 392.92 L187.9 392.92 L187.9 392.92 L188.4 392.92 L188.4 392.93 L188.9 392.93 L188.9 392.94 L189.4 392.94 L189.4 392.95 L189.9 392.95 L189.9 392.95 L190.4 392.95 L190.4 392.96 L190.9 392.96 L190.9 392.97 L191.4 392.97 L191.4 392.97 L191.9 392.97 L191.9 392.98 L192.4 392.98 L192.4 392.99 L192.9 392.99 L192.9 392.99 L193.4 392.99 L193.4 393.00 L193.9 393.00 L193.9 393.00 L194.4 393.00 L194.4 393.00 L194.9 393.00 L194.9 393.00 L195.4 393.00 L195.4 393.00 L195.9 393.00 L195.9 393.00 L196.4 393.00 L196.4 393.00 L196.9 393.00 L196.9 393.00 L197.4 393.00 L197.4 393.00 L197.9 393.00 L197.9 393.00 L198.4 393.00 L198.4 393.00 L198.9 393.00 L198.9 393.00 L199.4 393.00 L199.4 393.00 L199.9 393.00 L199.9 393.00 L200.4 393.00 L200.4 393.00 L200.9 393.00 L200.9 393.00 L201.4 393.00 L201.4 393.00 L201.9 393.00 L201.9 393.00 L202.4 393.00 L202.4 393.00 L202.9 393.00 L202.9 393.00 L203.4 393.00 L203.4 393.00 L203.9 393.00 L203.9 393.00 L204.4 393.00 L204.4 393.00 L204.9 393.00 L204.9 393.00 L205.4 393.00 L205.4 393.00 L205.9 393.00 L205.9 393.00 L206.4 393.00 L206.4 393.00 L206.9 393.00 L206.9 393.00 L207.4 393.00 L207.4 393.00 L207.9 393.00 L207.9 393.00 L208.4 393.00 L208.4 393.00 L208.9 393.00 L208.9 393.00 L209.4 393.00 L209.4 393.00 L209.9 393.00 L209.9 393.00 L210.4 393.00 L210.4 393.00 L210.9 393.00 L210.9 393.00 L211.4 393.00 L211.4 393.00 L211.9 393.00 L211.9 393.00 L212.4 393.00 L212.4 393.00 L212.9 393.00 L212.9 393.00 L213.4 393.00 L213.4 393.00 L213.9 393.00 L213.9 393.00 L214.4 393.00 L214.4 393.00 L214.9 393.00 L214.9 393.00 L215.4 393.00 L215.4 393.00 L215.9 393.00 L215.9 393.00 L216.4 393.00 L216.4 393.00 L216.9 393.00 L216.9 393.00 L217.4 393.00 L217.4 393.00 L217.9 393.00 L217.9 393.00 L218.4 393.00 L218.4 393.00 L218.9 393.00 L218.9 393.00 L219.4 393.00 L219.4 393.00 L219.9 393.00 L219.9 393.00 L220.4 393.00 L220.4 393.00 L220.9 393.00 L220.9 393.00 L221.4 393.00 L221.4 393.00 L221.9 393.00 L221.9 393.00 L222.4 393.00 L222.4 393.00 L222.9 393.00 L222.9 393.00 L223.4 393.00 L223.4 393.00 L223.9 393.00 L223.9 393.00 L224.4 393.00 L224.4 393.00 L224.9 393.00 L224.9 393.00 L225.4 393.00 L225.4 393.00 L225.9 393.00 L225.9 393.00 L226.4 393.00 L226.4 393.00 L226.9 393.00 L226.9 393.00 L227.4 393.00 L227.4 393.00 L227.9 393.00 L227.9 393.00 L228.4 393.00 L228.4 393.00 L228.9 393.00 L228.9 393.00 L229.4 393.00 L229.4 393.00 L229.9 393.00 L229.9 393.00 L230.4 393.00 L230.4 393 Z" fill="#000"/><rect x="146" y="295" width="1" height="98" fill="#8acc7a"/><rect x="247" y="295" width="1" height="98" fill="#ec7466"/></svg>
<div class="t" style="left:264.3px;top:299.20px;">U</div>
<div class="t" style="left:264.3px;top:321.90px;">L</div>
<div style="left:280px;top:305px;width:60px;height:1px;background:#c0c0c0"></div>
<div style="left:280px;top:306px;width:60px;height:1px;background:#f8f8f8"></div>
<div style="left:284px;top:313px;width:53px;height:1px;background:#b4b4b4"></div>
<div style="left:284px;top:314px;width:53px;height:1px;background:#d4d4d4"></div>
<svg style="position:absolute;left:329.50px;top:300.50px" width="8" height="12" viewBox="0 0 8 12"><defs><linearGradient id="tg" x1="0" y1="0" x2="0" y2="1"><stop offset="0" stop-color="#fafafa"/><stop offset="1" stop-color="#d4d4d4"/></linearGradient></defs><path d="M0.6 2.2 Q0.6 0.6 2.2 0.6 L5.8 0.6 Q7.4 0.6 7.4 2.2 L7.4 7.4 Q7.4 8.2 6.6 9 L4.4 11.1 Q4 11.4 3.6 11.1 L1.4 9 Q0.6 8.2 0.6 7.4 Z" fill="url(#tg)" stroke="#8a8a8a" stroke-width="1"/></svg>
<div style="left:280px;top:328px;width:60px;height:1px;background:#c0c0c0"></div>
<div style="left:280px;top:329px;width:60px;height:1px;background:#f8f8f8"></div>
<div style="left:284px;top:336px;width:53px;height:1px;background:#b4b4b4"></div>
<div style="left:284px;top:337px;width:53px;height:1px;background:#d4d4d4"></div>
<svg style="position:absolute;left:283.50px;top:323.50px" width="8" height="12" viewBox="0 0 8 12"><defs><linearGradient id="tg" x1="0" y1="0" x2="0" y2="1"><stop offset="0" stop-color="#fafafa"/><stop offset="1" stop-color="#d4d4d4"/></linearGradient></defs><path d="M0.6 2.2 Q0.6 0.6 2.2 0.6 L5.8 0.6 Q7.4 0.6 7.4 2.2 L7.4 7.4 Q7.4 8.2 6.6 9 L4.4 11.1 Q4 11.4 3.6 11.1 L1.4 9 Q0.6 8.2 0.6 7.4 Z" fill="url(#tg)" stroke="#8a8a8a" stroke-width="1"/></svg>
<div style="left:343px;top:300px;width:37px;height:12px;border:1px solid #a4a4a4;box-sizing:border-box"></div>
<div style="left:344px;top:301px;width:35px;height:10px;background:#fff"></div>
<div class="t" style="left:345.2px;top:300.00px;">245</div>
<div style="left:343px;top:322px;width:37px;height:13px;border:1px solid #a4a4a4;box-sizing:border-box"></div>
<div style="left:344px;top:323px;width:35px;height:11px;background:#fff"></div>
<div class="t" style="left:345.2px;top:322.80px;">21</div>
<div style="left:262px;top:349px;width:10px;height:9px;border:1px solid #bcbcbc;box-sizing:border-box;background:linear-gradient(135deg,#d8d8d8,#f4f4f4)"></div>
<div class="t" style="left:287.8px;top:348.40px;">Reverse</div>
<div style="left:263px;top:373px;width:71px;height:14px;border:1px solid #8e8f8f;border-radius:2px;box-sizing:border-box;background:linear-gradient(180deg,#f6f6f6 0%,#ebebeb 48%,#dddddd 52%,#cfcfcf 100%)"></div>
<div class="t" style="left:278.4px;top:375.70px;">Threshold</div>
<div style="left:343px;top:372px;width:37px;height:13px;border:1px solid #a8a8a8;box-sizing:border-box"></div>
<div class="t" style="left:391px;top:36.30px;">Selected Part</div>
<div style="left:390px;top:47px;width:131px;height:112px;border:1px solid #a0a0a0;box-sizing:border-box"></div>
<svg style="position:absolute;left:391px;top:70.8px" width="129" height="63.8" viewBox="391 70.8 129 63.8"><rect x="391" y="70.8" width="129" height="63.8" fill="#2a0a07"/><rect x="391" y="70.8" width="22" height="63.8" fill="#140606"/><polygon points="480,70.8 520,70.8 520,134.6 490,134.6 485,110 478,85" fill="#120505"/><path d="M404 134.6 Q400 110 404 90 Q408 78 414 75" fill="none" stroke="#0e2a2a" stroke-width="1.5"/><polygon points="476,74 484,72 520,100 520,112" fill="#3a0a08"/><path d="M478 80 L519 113" fill="none" stroke="#9a1410" stroke-width="1" stroke-dasharray="2 1.5"/><path d="M484 74 L519 101" fill="none" stroke="#7a1010" stroke-width="0.9" stroke-dasharray="1.5 2"/><path d="M503 134.6 Q506 120 498 105" fill="none" stroke="#0e2a2a" stroke-width="1.5"/><rect x="417.8" y="68.8" width="61.5" height="7.2" rx="1.5" fill="#f6d01e" stroke="#c0301a" stroke-width="0.9"/><rect x="415" y="92" width="68" height="15.3" rx="6.5" fill="#f6d01e" stroke="#c0301a" stroke-width="0.9"/><path d="M415 135.6 L415 127 Q415 123.7 418 123.7 L481 123.7 Q484 123.7 484 127 L484 135.6" fill="#f6d01e" stroke="#c0301a" stroke-width="0.9"/><path d="M521 118.5 L516 121 Q511 125 508 135.6 L521 135.6 Z" fill="#f6d01e" stroke="#c0301a" stroke-width="0.9"/><rect x="414" y="70.8" width="4" height="2" fill="#d02010"/></svg>
<div class="t" style="left:391.7px;top:162.30px;">Pre-Processing:</div>
<div class="t" style="left:391.7px;top:181.10px;">Normalized</div>
<div style="left:458.4px;top:178.2px;width:65.6px;height:12px;background:#fff;border:1px solid #e8e8e8;border-top-color:#d4d4d4;box-sizing:border-box"></div>
<div class="t" style="left:460.5px;top:179.20px;">FALSE</div>
<svg style="position:absolute;left:515.5px;top:182.60px" width="6" height="4" viewBox="0 0 6 4"><path d="M0.3 0.5 L5.7 0.5 L3 3.5 Z" fill="#222"/></svg>
<div class="t" style="left:391.7px;top:200.70px;">SMS of R</div>
<div style="left:458.4px;top:197.9px;width:65.6px;height:12px;background:#fff;border:1px solid #e8e8e8;border-top-color:#d4d4d4;box-sizing:border-box"></div>
<div class="t" style="left:460.5px;top:198.90px;">0</div>
<svg style="position:absolute;left:515.5px;top:202.30px" width="6" height="4" viewBox="0 0 6 4"><path d="M0.3 0.5 L5.7 0.5 L3 3.5 Z" fill="#222"/></svg>
<div class="t" style="left:391.7px;top:220.60px;">SMS of G</div>
<div style="left:458.4px;top:217.6px;width:65.6px;height:12px;background:#fff;border:1px solid #e8e8e8;border-top-color:#d4d4d4;box-sizing:border-box"></div>
<div class="t" style="left:460.5px;top:218.60px;">0</div>
<svg style="position:absolute;left:515.5px;top:222.00px" width="6" height="4" viewBox="0 0 6 4"><path d="M0.3 0.5 L5.7 0.5 L3 3.5 Z" fill="#222"/></svg>
<div class="t" style="left:391.7px;top:240.00px;">SMS of B</div>
<div style="left:458.4px;top:237.1px;width:65.6px;height:12px;background:#fff;border:1px solid #e8e8e8;border-top-color:#d4d4d4;box-sizing:border-box"></div>
<div class="t" style="left:460.5px;top:238.10px;">0</div>
<svg style="position:absolute;left:515.5px;top:241.50px" width="6" height="4" viewBox="0 0 6 4"><path d="M0.3 0.5 L5.7 0.5 L3 3.5 Z" fill="#222"/></svg>
<div class="t" style="left:391.7px;top:259.20px;">Processing:</div>
<div class="t" style="left:391.7px;top:281.30px;">SelectedMode</div>
<div style="left:458.4px;top:275.6px;width:65.6px;height:12px;background:#fff;border:1px solid #e8e8e8;border-top-color:#d4d4d4;box-sizing:border-box"></div>
<div class="t" style="left:460.5px;top:276.60px;">R &amp; G &amp; B</div>
<svg style="position:absolute;left:515.5px;top:280.00px" width="6" height="4" viewBox="0 0 6 4"><path d="M0.3 0.5 L5.7 0.5 L3 3.5 Z" fill="#222"/></svg>
<div class="t" style="left:391.7px;top:296.50px;">SilkExpSize</div>
<div style="left:458.4px;top:294.8px;width:65.6px;height:12px;background:#fff;border:1px solid #e8e8e8;border-top-color:#d4d4d4;box-sizing:border-box"></div>
<div class="t" style="left:460.5px;top:295.80px;">0</div>
<svg style="position:absolute;left:515.5px;top:299.20px" width="6" height="4" viewBox="0 0 6 4"><path d="M0.3 0.5 L5.7 0.5 L3 3.5 Z" fill="#222"/></svg>
<div class="t" style="left:391.7px;top:312.70px;">Eliminate Holes:</div>
<div class="t" style="left:391.7px;top:329.40px;">Mask Size</div>
<div style="left:458.4px;top:326.6px;width:65.6px;height:12px;background:#fff;border:1px solid #e8e8e8;border-top-color:#d4d4d4;box-sizing:border-box"></div>
<div class="t" style="left:460.5px;top:327.60px;">3</div>
<svg style="position:absolute;left:515.5px;top:331.00px" width="6" height="4" viewBox="0 0 6 4"><path d="M0.3 0.5 L5.7 0.5 L3 3.5 Z" fill="#222"/></svg>
<div class="t" style="left:391.7px;top:345.70px;">Eliminate Pepper Noise:</div>
<div class="t" style="left:391.7px;top:363.60px;">Mask Size</div>
<div style="left:458.4px;top:362.1px;width:65.6px;height:12px;background:#fff;border:1px solid #e8e8e8;border-top-color:#d4d4d4;box-sizing:border-box"></div>
<div class="t" style="left:460.5px;top:363.10px;">0</div>
<svg style="position:absolute;left:515.5px;top:366.50px" width="6" height="4" viewBox="0 0 6 4"><path d="M0.3 0.5 L5.7 0.5 L3 3.5 Z" fill="#222"/></svg>
<div class="t" style="left:391.7px;top:383.80px;">Elim Order</div>
<div style="left:458.4px;top:381.20000000000005px;width:65.6px;height:12px;background:#fff;border:1px solid #e8e8e8;border-top-color:#d4d4d4;box-sizing:border-box"></div>
<div class="t" style="left:460.5px;top:382.20px;">First Holes,</div>
<svg style="position:absolute;left:515.5px;top:385.60px" width="6" height="4" viewBox="0 0 6 4"><path d="M0.3 0.5 L5.7 0.5 L3 3.5 Z" fill="#222"/></svg>
<div class="t" style="left:548.6px;top:19.10px;">PadID List:</div>
<div style="left:543px;top:25px;width:1px;height:311px;background:#fbfdff"></div>
<div style="left:543px;top:336px;width:170px;height:1px;background:#e6eef6"></div>
<div style="left:547px;top:35px;width:155px;height:293px;border:1px solid #a6a6a6;box-sizing:border-box"></div>
<div style="left:548px;top:36px;width:153px;height:291px;background:#fff"></div>
<div style="left:548px;top:36px;width:141px;height:291px;overflow:hidden"><div style="left:-548px;top:-36px;width:713px;height:416px"><div style="left:571px;top:36px;width:1px;height:291px;background:#d4d4d4"></div>
<div style="left:585px;top:61px;width:1px;height:266px;background:#d4d4d4"></div>
<div style="left:572px;top:42px;width:5px;height:1px;background:#c4c4c4"></div>
<div class="t" style="left:579.5px;top:36.50px">LaunchPadID</div>
<div style="left:572px;top:50px;width:5px;height:1px;background:#c4c4c4"></div>
<div class="t" style="left:579.5px;top:44.67px">Manual Select</div>
<div style="left:572px;top:58px;width:5px;height:1px;background:#c4c4c4"></div>
<div class="t" style="left:579.5px;top:52.84px">ComponentID</div>
<div style="left:586px;top:66px;width:5px;height:1px;background:#c4c4c4"></div>
<div class="t" style="left:593.8px;top:61.01px">!!Empty!!</div>
<div style="left:586px;top:74px;width:5px;height:1px;background:#c4c4c4"></div>
<div class="t" style="left:593.5px;top:69.18px;color:#303030;-webkit-text-stroke:0">C101</div>
<div style="left:586px;top:82px;width:5px;height:1px;background:#c4c4c4"></div>
<div class="t" style="left:593.5px;top:77.35px;color:#303030;-webkit-text-stroke:0">C102</div>
<div style="left:586px;top:91px;width:5px;height:1px;background:#c4c4c4"></div>
<div class="t" style="left:593.5px;top:85.52px;color:#303030;-webkit-text-stroke:0">C103</div>
<div style="left:586px;top:99px;width:5px;height:1px;background:#c4c4c4"></div>
<div class="t" style="left:593.5px;top:93.69px;color:#303030;-webkit-text-stroke:0">C104</div>
<div style="left:586px;top:107px;width:5px;height:1px;background:#c4c4c4"></div>
<div class="t" style="left:593.5px;top:101.86px;color:#303030;-webkit-text-stroke:0">C201</div>
<div style="left:586px;top:115px;width:5px;height:1px;background:#c4c4c4"></div>
<div class="t" style="left:593.5px;top:110.03px;color:#303030;-webkit-text-stroke:0">C202</div>
<div style="left:586px;top:123px;width:5px;height:1px;background:#c4c4c4"></div>
<div class="t" style="left:593.5px;top:118.20px;color:#303030;-webkit-text-stroke:0">C203</div>
<div style="left:586px;top:131px;width:5px;height:1px;background:#c4c4c4"></div>
<div class="t" style="left:593.5px;top:126.37px;color:#303030;-webkit-text-stroke:0">C204</div>
<div style="left:586px;top:140px;width:5px;height:1px;background:#c4c4c4"></div>
<div class="t" style="left:593.5px;top:134.54px;color:#303030;-webkit-text-stroke:0">C209</div>
<div style="left:586px;top:148px;width:5px;height:1px;background:#c4c4c4"></div>
<div class="t" style="left:593.5px;top:142.71px;color:#303030;-webkit-text-stroke:0">C210</div>
<div style="left:586px;top:156px;width:5px;height:1px;background:#c4c4c4"></div>
<div class="t" style="left:593.5px;top:150.88px;color:#303030;-webkit-text-stroke:0">C211</div>
<div style="left:586px;top:164px;width:5px;height:1px;background:#c4c4c4"></div>
<div class="t" style="left:593.5px;top:159.05px;color:#303030;-webkit-text-stroke:0">C212</div>
<div style="left:586px;top:172px;width:5px;height:1px;background:#c4c4c4"></div>
<div class="t" style="left:593.5px;top:167.22px;color:#303030;-webkit-text-stroke:0">C213</div>
<div style="left:586px;top:180px;width:5px;height:1px;background:#c4c4c4"></div>
<div class="t" style="left:593.5px;top:175.39px;color:#303030;-webkit-text-stroke:0">C216</div>
<div style="left:586px;top:189px;width:5px;height:1px;background:#c4c4c4"></div>
<div class="t" style="left:593.5px;top:183.56px;color:#303030;-webkit-text-stroke:0">C217</div>
<div style="left:586px;top:197px;width:5px;height:1px;background:#c4c4c4"></div>
<div class="t" style="left:593.5px;top:191.73px;color:#303030;-webkit-text-stroke:0">C218</div>
<div style="left:586px;top:205px;width:5px;height:1px;background:#c4c4c4"></div>
<div class="t" style="left:593.5px;top:199.90px;color:#303030;-webkit-text-stroke:0">C224</div>
<div style="left:586px;top:213px;width:5px;height:1px;background:#c4c4c4"></div>
<div class="t" style="left:593.5px;top:208.07px;color:#303030;-webkit-text-stroke:0">C225</div>
<div style="left:586px;top:221px;width:5px;height:1px;background:#c4c4c4"></div>
<div class="t" style="left:593.5px;top:216.24px;color:#303030;-webkit-text-stroke:0">C238</div>
<div style="left:586px;top:229px;width:5px;height:1px;background:#c4c4c4"></div>
<div class="t" style="left:593.5px;top:224.41px;color:#303030;-webkit-text-stroke:0">C239</div>
<div style="left:586px;top:238px;width:5px;height:1px;background:#c4c4c4"></div>
<div class="t" style="left:593.5px;top:232.58px;color:#303030;-webkit-text-stroke:0">C301</div>
<div style="left:586px;top:246px;width:5px;height:1px;background:#c4c4c4"></div>
<div class="t" style="left:593.5px;top:240.75px;color:#303030;-webkit-text-stroke:0">C302</div>
<div style="left:586px;top:254px;width:5px;height:1px;background:#c4c4c4"></div>
<div class="t" style="left:593.5px;top:248.92px;color:#303030;-webkit-text-stroke:0">C303</div>
<div style="left:586px;top:262px;width:5px;height:1px;background:#c4c4c4"></div>
<div class="t" style="left:593.5px;top:257.09px;color:#303030;-webkit-text-stroke:0">C304</div>
<div style="left:586px;top:270px;width:5px;height:1px;background:#c4c4c4"></div>
<div class="t" style="left:593.5px;top:265.26px;color:#303030;-webkit-text-stroke:0">D103</div>
<div style="left:586px;top:278px;width:5px;height:1px;background:#c4c4c4"></div>
<div class="t" style="left:593.5px;top:273.43px;color:#303030;-webkit-text-stroke:0">D236</div>
<div style="left:586px;top:287px;width:5px;height:1px;background:#c4c4c4"></div>
<div class="t" style="left:593.5px;top:281.60px;color:#303030;-webkit-text-stroke:0">DZ101</div>
<div style="left:586px;top:295px;width:5px;height:1px;background:#c4c4c4"></div>
<div class="t" style="left:593.5px;top:289.77px;color:#303030;-webkit-text-stroke:0">F300</div>
<div style="left:586px;top:303px;width:5px;height:1px;background:#c4c4c4"></div>
<div class="t" style="left:593.5px;top:297.94px;color:#303030;-webkit-text-stroke:0">Q201</div>
<div style="left:586px;top:311px;width:5px;height:1px;background:#c4c4c4"></div>
<div class="t" style="left:593.5px;top:306.11px;color:#303030;-webkit-text-stroke:0">Q202</div>
<div style="left:586px;top:319px;width:5px;height:1px;background:#c4c4c4"></div>
<div class="t" style="left:593.5px;top:314.28px;color:#303030;-webkit-text-stroke:0">Q222</div>
<div style="left:586px;top:327px;width:5px;height:1px;background:#c4c4c4"></div>
<div class="t" style="left:593.5px;top:322.45px;color:#303030;-webkit-text-stroke:0">Q233</div>
<div style="left:568px;top:55px;width:7px;height:6px;border:1px solid #9ab0c8;box-sizing:border-box;background:#f4f8fc"></div>
<div style="left:570px;top:58px;width:3px;height:1px;background:#1a3a8a"></div></div></div>
<div style="left:689px;top:36px;width:12px;height:291px;background:linear-gradient(90deg,#f4f4f4,#fbfbfb)"></div>
<div style="left:689px;top:49px;width:11px;height:78px;border:1px solid #a4a4a4;border-radius:1.5px;box-sizing:border-box;background:linear-gradient(90deg,#f2f2f2,#e2e2e2)"></div>
<svg style="position:absolute;left:692px;top:40px" width="6" height="4"><path d="M0.3 3.5 L3 0.5 L5.7 3.5 Z" fill="#333"/></svg>
<svg style="position:absolute;left:692px;top:321px" width="6" height="4"><path d="M0.3 0.5 L3 3.5 L5.7 0.5 Z" fill="#333"/></svg>
<div style="left:692px;top:86px;width:4px;height:1px;background:#888"></div>
<div style="left:692px;top:88px;width:4px;height:1px;background:#888"></div>
<div style="left:692px;top:90px;width:4px;height:1px;background:#888"></div>
<div style="left:706px;top:35px;width:7px;height:293px;border-left:1px solid #5c5c5c;border-top:1px solid #5c5c5c;border-bottom:1px solid #5c5c5c;box-sizing:border-box;background:#a9a9a9"></div>
<div style="left:708px;top:36px;width:5px;height:12px;background:#fff"></div>
<div style="left:708px;top:48px;width:5px;height:14px;background:#a6d2f0"></div>
<div class="t" style="left:548.3px;top:339.50px;">Current Pad Alg:</div>
<div style="left:544px;top:347px;width:1px;height:67px;background:#e2e2e2"></div>
<div style="left:544px;top:347px;width:131px;height:1px;background:#e2e2e2"></div>
<div style="left:674px;top:347px;width:1px;height:67px;background:#e2e2e2"></div>
<div style="left:556px;top:355px;width:10px;height:9px;border:1px solid #8f8f8f;box-sizing:border-box;background:linear-gradient(135deg,#d6d6d6,#f6f6f6)"></div>
<svg style="position:absolute;left:557px;top:355px" width="8" height="8"><path d="M2 4.2 L3.5 6.2 L6.2 2" fill="none" stroke="#4a64c0" stroke-width="1.3"/></svg>
<div class="t" style="left:568.6px;top:354.70px;">RGB Filter Enable</div>
<div class="t" style="left:555.8px;top:368.70px;">BrdgAddDelta(um):</div>
<div style="left:637px;top:368px;width:33px;height:12px;background:#fff;border:1px solid #e6e6e6;box-sizing:border-box"></div>
<div class="t" style="left:639.5px;top:368.90px;">0</div>
<div class="t" style="left:555.8px;top:390.00px;">Manual Test Bridge:</div>
<div style="left:556px;top:401px;width:84px;height:11px;background:#fff;border:1px solid #e6e6e6;box-sizing:border-box"></div>
<div class="t" style="left:558.5px;top:401.20px;">Has bridge</div>
<div class="t" style="left:685.6px;top:339.70px;">Bridge</div>
<div style="left:682px;top:347px;width:1px;height:67px;background:#e2e2e2"></div>
<div style="left:682px;top:347px;width:31px;height:1px;background:#e2e2e2"></div>
<div style="left:707px;top:353px;width:7px;height:8px;border:1px solid #b8b8b8;box-sizing:border-box;background:#e8e8e8"></div>
<div style="left:686px;top:367px;width:9px;height:8px;border:1px solid #b8b8b8;box-sizing:border-box;background:linear-gradient(135deg,#d8d8d8,#f4f4f4)"></div>
<div class="t" style="left:699px;top:366.20px;">TL</div>
<div style="left:686px;top:393px;width:9px;height:8px;border:1px solid #b8b8b8;box-sizing:border-box;background:linear-gradient(135deg,#d8d8d8,#f4f4f4)"></div>
<div class="t" style="left:699px;top:392.20px;">L</div>
</div></body></html>
